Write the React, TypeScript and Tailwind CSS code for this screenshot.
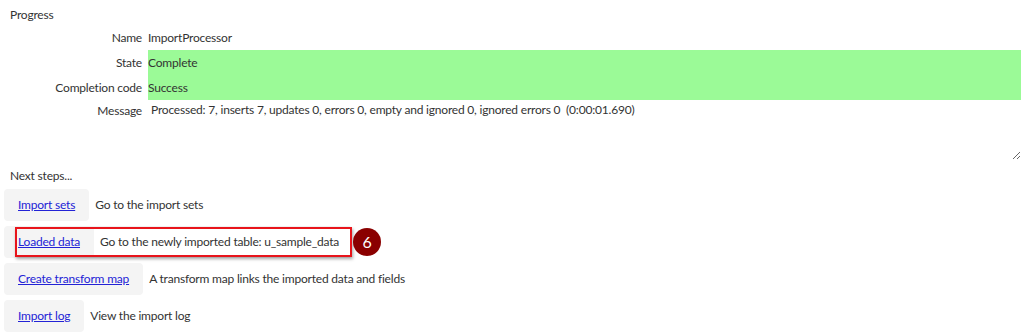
import React from 'react';

const font = { fontFamily: 'Lato, "Noto Sans", sans-serif', letterSpacing: '-0.2px' };

const fields = [
  { label: 'Name', value: 'ImportProcessor', green: false },
  { label: 'State', value: 'Complete', green: true },
  { label: 'Completion code', value: 'Success', green: true },
];

const steps = [
  { link: 'Import sets', text: 'Go to the import sets' },
  { link: 'Loaded data', text: 'Go to the newly imported table: u_sample_data', marked: true },
  { link: 'Create transform map', text: 'A transform map links the imported data and fields' },
  { link: 'Import log', text: 'View the import log' },
];

function StepRow({ link, text, marked }: { link: string; text: string; marked?: boolean }) {
  if (marked) {
    return (
      <div className="flex items-center h-[32px]">
        <div className="flex items-center h-full bg-[#f4f4f4] rounded-sm pl-[11px]">
          <div className="flex items-center h-[30px] border-2 border-[#e8141b] shadow-[1px_2px_3px_rgba(0,0,0,0.35)]">
            <div className="flex items-center h-full bg-[#f4f4f4] pl-[1px] pr-[14px]">
              <a href="#" className="text-[#2323d6] underline">{link}</a>
            </div>
            <span className="bg-white h-full flex items-center pl-[6px] pr-[11px]">{text}</span>
          </div>
        </div>
        <div className="ml-[1px] w-[28px] h-[28px] rounded-full bg-[#8a0000] text-white flex items-center justify-center text-[16px]">
          6
        </div>
      </div>
    );
  }
  return (
    <div className="flex items-center h-[32px]">
      <div className="flex items-center h-full bg-[#f4f4f4] rounded-sm px-[14px]">
        <a href="#" className="text-[#2323d6] underline">{link}</a>
      </div>
      <span className="pl-[6px]">{text}</span>
    </div>
  );
}

export default function App() {
  return (
    <div className="w-[1024px] h-[333px] bg-white text-[#333] text-[12px] overflow-hidden" style={font}>
      <div className="pl-[10px] pt-[6px] h-[18px] leading-[18px] text-[12px]">Progress</div>

      <div className="mt-[7px] flex flex-col pr-[3px]">
        {fields.map((f) => (
          <div key={f.label} className="flex h-[25px] items-center">
            <div className="w-[142px] text-right">{f.label}</div>
            <div className={`ml-[6px] flex-1 h-full flex items-center ${f.green ? 'bg-[#9bfa97]' : ''}`}>
              {f.value}
            </div>
          </div>
        ))}
        <div className="flex">
          <div className="w-[142px] text-right pt-[2px]">Message</div>
          <textarea
            readOnly
            className="ml-[6px] flex-1 h-[60px] px-[3px] pt-[1px] resize-y outline-none text-[12px] text-[#333]"
            style={font}
            defaultValue="Processed: 7, inserts 7, updates 0, errors 0, empty and ignored 0, ignored errors 0  (0:00:01.690)"
          />
        </div>
      </div>

      <div className="pl-[10px] mt-[6px] h-[20px] leading-[20px] text-[12px]">Next steps...</div>

      <div className="pl-[4px] mt-[3px] flex flex-col gap-[5px]">
        {steps.map((s) => (
          <StepRow key={s.link} {...s} />
        ))}
      </div>
    </div>
  );
}
